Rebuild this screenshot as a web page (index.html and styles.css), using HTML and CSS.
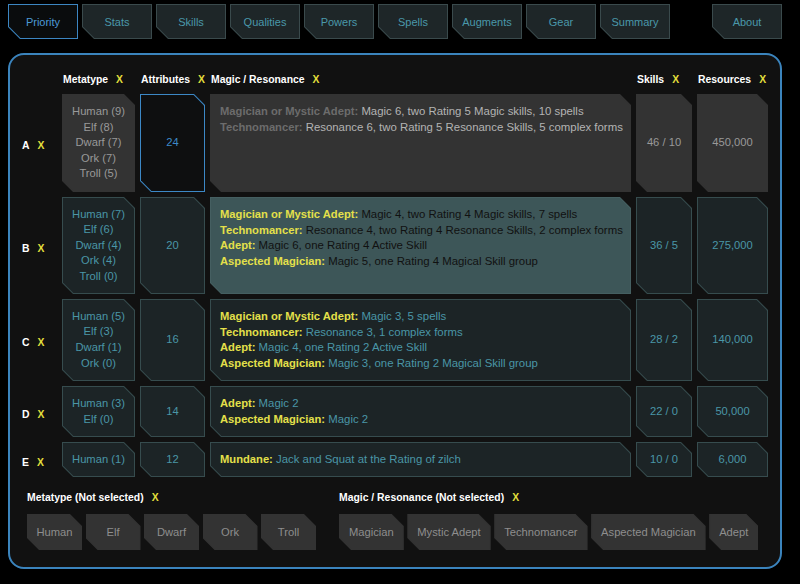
FILE: index.html
```html
<!DOCTYPE html>
<html>
<head>
<meta charset="utf-8">
<link rel="stylesheet" href="styles.css">
</head>
<body>
<nav class="tabs">
  <div class="tab cut-bl active">Priority</div>
  <div class="tab cut-bl">Stats</div>
  <div class="tab cut-bl">Skills</div>
  <div class="tab cut-bl">Qualities</div>
  <div class="tab cut-bl">Powers</div>
  <div class="tab cut-bl">Spells</div>
  <div class="tab cut-bl">Augments</div>
  <div class="tab cut-bl">Gear</div>
  <div class="tab cut-bl">Summary</div>
  <div class="tab cut-bl about">About</div>
</nav>

<main class="panel">
  <div class="grid">
    <div></div>
    <div class="hd">Metatype<span class="x">X</span></div>
    <div class="hd">Attributes<span class="x">X</span></div>
    <div class="hd">Magic / Resonance<span class="x">X</span></div>
    <div class="hd">Skills<span class="x">X</span></div>
    <div class="hd">Resources<span class="x">X</span></div>

    <div class="rowlabel">A<span class="x">X</span></div>
    <div class="cell cut meta off"><span>Human (9)</span><span>Elf (8)</span><span>Dwarf (7)</span><span>Ork (7)</span><span>Troll (5)</span></div>
    <div class="cell cut num sel">24</div>
    <div class="cell cut magic off">
      <div><b>Magician or Mystic Adept:</b> Magic 6, two Rating 5 Magic skills, 10 spells</div>
      <div><b>Technomancer:</b> Resonance 6, two Rating 5 Resonance Skills, 5 complex forms</div>
    </div>
    <div class="cell cut num off">46 / 10</div>
    <div class="cell cut num off">450,000</div>

    <div class="rowlabel">B<span class="x">X</span></div>
    <div class="cell cut meta"><span>Human (7)</span><span>Elf (6)</span><span>Dwarf (4)</span><span>Ork (4)</span><span>Troll (0)</span></div>
    <div class="cell cut num">20</div>
    <div class="cell cut magic hi">
      <div><b>Magician or Mystic Adept:</b> Magic 4, two Rating 4 Magic skills, 7 spells</div>
      <div><b>Technomancer:</b> Resonance 4, two Rating 4 Resonance Skills, 2 complex forms</div>
      <div><b>Adept:</b> Magic 6, one Rating 4 Active Skill</div>
      <div><b>Aspected Magician:</b> Magic 5, one Rating 4 Magical Skill group</div>
    </div>
    <div class="cell cut num">36 / 5</div>
    <div class="cell cut num">275,000</div>

    <div class="rowlabel">C<span class="x">X</span></div>
    <div class="cell cut meta"><span>Human (5)</span><span>Elf (3)</span><span>Dwarf (1)</span><span>Ork (0)</span></div>
    <div class="cell cut num">16</div>
    <div class="cell cut magic">
      <div><b>Magician or Mystic Adept:</b> Magic 3, 5 spells</div>
      <div><b>Technomancer:</b> Resonance 3, 1 complex forms</div>
      <div><b>Adept:</b> Magic 4, one Rating 2 Active Skill</div>
      <div><b>Aspected Magician:</b> Magic 3, one Rating 2 Magical Skill group</div>
    </div>
    <div class="cell cut num">28 / 2</div>
    <div class="cell cut num">140,000</div>

    <div class="rowlabel">D<span class="x">X</span></div>
    <div class="cell cut meta"><span>Human (3)</span><span>Elf (0)</span></div>
    <div class="cell cut num">14</div>
    <div class="cell cut magic">
      <div><b>Adept:</b> Magic 2</div>
      <div><b>Aspected Magician:</b> Magic 2</div>
    </div>
    <div class="cell cut num">22 / 0</div>
    <div class="cell cut num">50,000</div>

    <div class="rowlabel">E<span class="x">X</span></div>
    <div class="cell cut meta"><span>Human (1)</span></div>
    <div class="cell cut num">12</div>
    <div class="cell cut magic">
      <div><b>Mundane:</b> Jack and Squat at the Rating of zilch</div>
    </div>
    <div class="cell cut num">10 / 0</div>
    <div class="cell cut num">6,000</div>
  </div>

  <div class="notsel">
    <section class="group meta-group">
      <div class="hd">Metatype (Not selected)<span class="x">X</span></div>
      <div class="btns">
        <div class="btn cut">Human</div>
        <div class="btn cut">Elf</div>
        <div class="btn cut">Dwarf</div>
        <div class="btn cut">Ork</div>
        <div class="btn cut">Troll</div>
      </div>
    </section>
    <section class="group magic-group">
      <div class="hd">Magic / Resonance (Not selected)<span class="x">X</span></div>
      <div class="btns">
        <div class="btn cut">Magician</div>
        <div class="btn cut">Mystic Adept</div>
        <div class="btn cut">Technomancer</div>
        <div class="btn cut">Aspected Magician</div>
        <div class="btn cut">Adept</div>
      </div>
    </section>
  </div>
</main>
</body>
</html>
```

FILE: styles.css
```css
* { box-sizing: border-box; }

html, body {
  margin: 0;
  background: #000;
}

body {
  width: 800px;
  height: 584px;
  overflow: hidden;
  font-family: "Liberation Sans", Arial, sans-serif;
  font-size: 11.2px;
  color: #4a96a6;
}

/* ---------- clipped-corner shapes ---------- */
.cut, .cut-bl {
  position: relative;
  z-index: 0;
  background: var(--bd, transparent);
}
.cut {
  --c: 11px;
  clip-path: polygon(0 0, calc(100% - var(--c)) 0, 100% var(--c), 100% 100%, var(--c) 100%, 0 calc(100% - var(--c)));
}
.cut::before {
  content: "";
  position: absolute;
  inset: 1px;
  z-index: -1;
  background: var(--bg);
  --ci: calc(var(--c) - 0.59px);
  clip-path: polygon(0 0, calc(100% - var(--ci)) 0, 100% var(--ci), 100% 100%, var(--ci) 100%, 0 calc(100% - var(--ci)));
}
.cut-bl {
  --c: 12px;
  clip-path: polygon(0 0, 100% 0, 100% 100%, var(--c) 100%, 0 calc(100% - var(--c)));
}
.cut-bl::before {
  content: "";
  position: absolute;
  inset: 1px;
  z-index: -1;
  background: var(--bg);
  --ci: calc(var(--c) - 0.59px);
  clip-path: polygon(0 0, 100% 0, 100% 100%, var(--ci) 100%, 0 calc(100% - var(--ci)));
}

/* ---------- tabs ---------- */
.tabs {
  display: flex;
  gap: 4px;
  padding: 4px 0 0 8px;
  height: 39px;
}
.tab {
  --bd: #3a4a4c;
  --bg: #1e2628;
  width: 70px;
  height: 35px;
  display: flex;
  align-items: center;
  justify-content: center;
  font-size: 11px;
  color: #4a98aa;
}
.tab.active {
  --bd: #3c86c2;
  --bg: #0a0c0d;
  color: #4c9ad6;
}
.tab.about { margin-left: 38px; }

/* ---------- panel ---------- */
.panel {
  margin: 14px 18px 0 8px;
  height: 516px;
  border: 2px solid #3b84bd;
  border-radius: 16px;
  background: #111;
  padding-top: 14px;
}

.grid {
  display: grid;
  grid-template-columns: 47px 73px 65px 421px 56px 71px;
  grid-template-rows: 20px 98px 97px 82px 51px 35px;
  gap: 5px;
}

.hd {
  display: flex;
  align-items: center;
  padding-left: 1px;
  font-size: 10.4px;
  font-weight: bold;
  color: #fff;
  line-height: 15px;
}
.x {
  color: #e2df3c;
  font-weight: bold;
  margin-left: 8px;
}

.rowlabel {
  display: flex;
  align-items: center;
  padding: 5px 0 0 12px;
  font-size: 10.4px;
  font-weight: bold;
  color: #fff;
}

.cell {
  --bd: #364c4e;
  --bg: #1c2426;
  color: #4a96a6;
  line-height: 15.6px;
}
.cell.off {
  --bd: #333;
  --bg: #333;
  color: #999;
}
.cell.sel {
  --bd: #3c88c6;
  --bg: #0e0f10;
  color: #3d8ac8;
}
.cell.hi {
  --bd: #455f61;
  --bg: #3d5658;
  color: #111;
}

.meta {
  display: flex;
  flex-direction: column;
  align-items: center;
  justify-content: center;
}
.num {
  display: flex;
  align-items: center;
  justify-content: center;
}
.magic {
  padding: 10px 0 10px 10px;
  font-size: 11.4px;
  white-space: nowrap;
}
.magic b { color: #e4e04a; font-size: 11.2px; }
.magic.off b { color: #6c6c6c; }
.magic.off { color: #b4b4b4; }

/* ---------- not selected ---------- */
.notsel {
  display: flex;
  margin-top: 13px;
  padding-left: 16px;
}
.group {
  display: flex;
  flex-direction: column;
  gap: 9px;
}
.meta-group { width: 312px; }

.btns {
  display: flex;
  gap: 3.5px;
  padding-left: 1px;
}
.btn {
  --c: 12px;
  --bd: #333;
  --bg: #333;
  height: 36px;
  padding: 0 10px;
  display: flex;
  align-items: center;
  justify-content: center;
  color: #8e8e8e;
}
.meta-group .btn {
  width: 55px;
  padding: 0;
}
```
